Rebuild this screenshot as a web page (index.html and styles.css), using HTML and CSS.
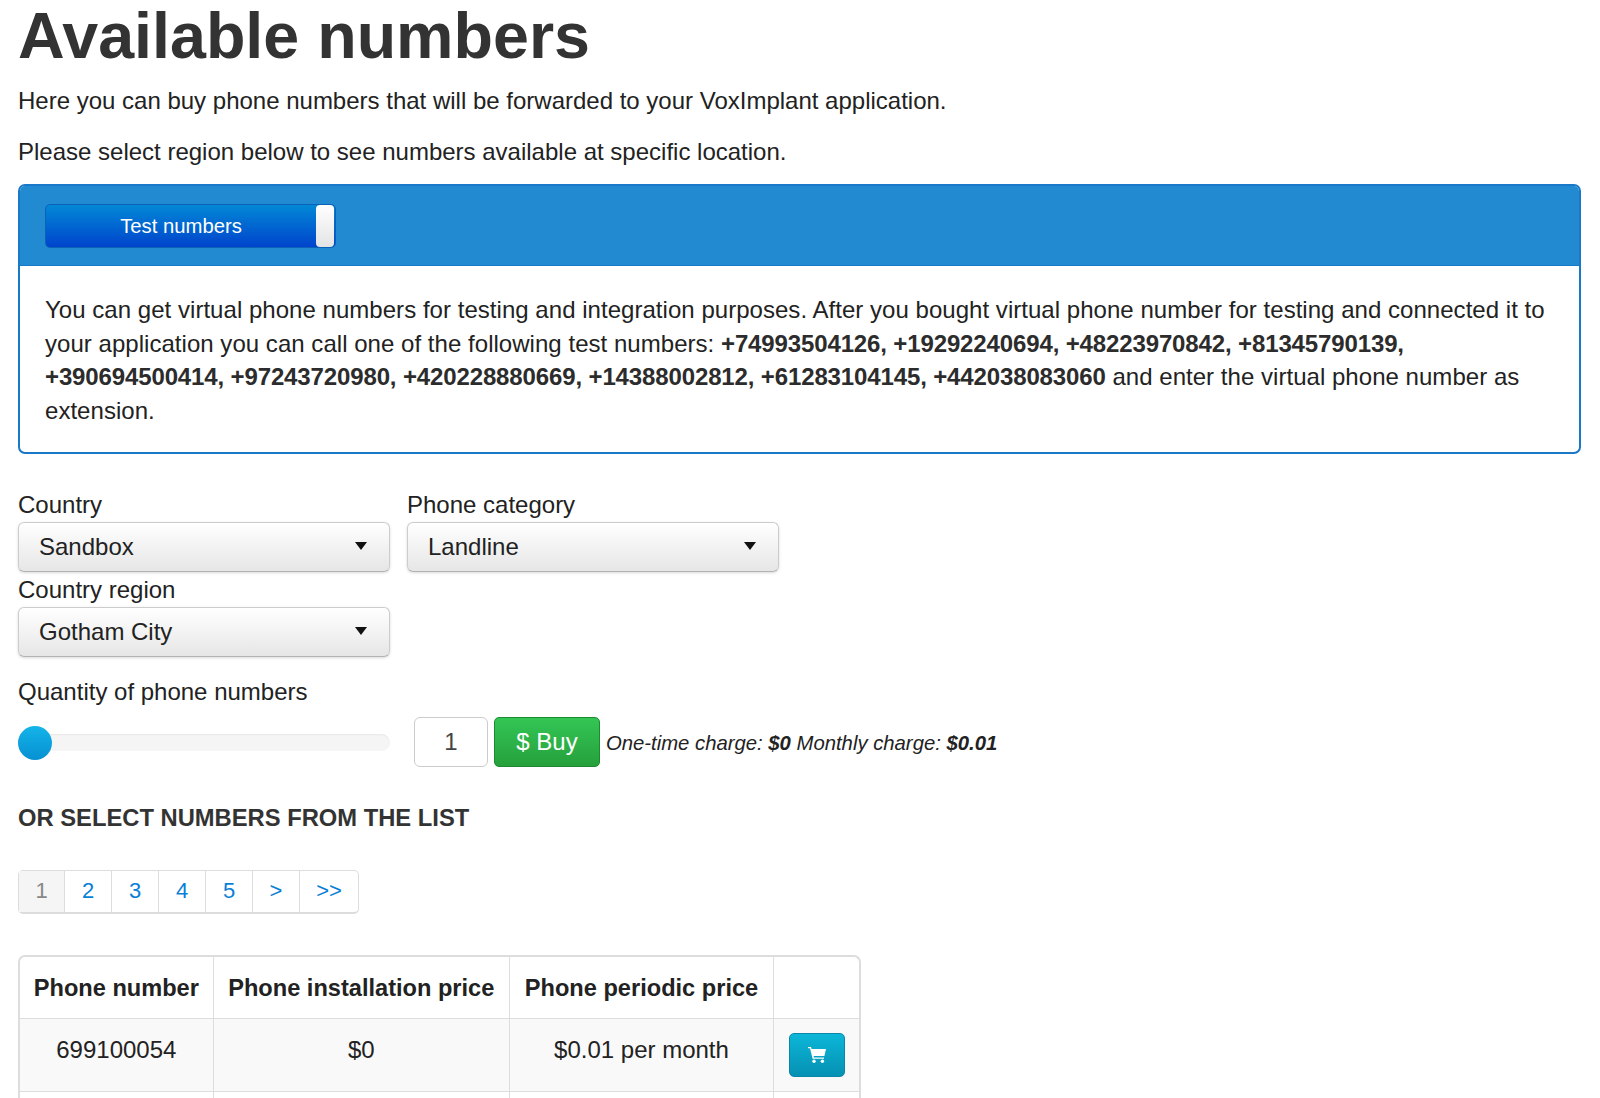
FILE: index.html
```html
<!DOCTYPE html>
<html lang="en">

<head>
    <meta charset="UTF-8">
    <meta name="viewport" content="width=device-width, initial-scale=1.0">
    <title>Available numbers</title>
    <link rel="stylesheet" href="styles.css">
</head>

<body>
    <main class="page">
        <h1>Available numbers</h1>
        <p class="intro">Here you can buy phone numbers that will be forwarded to your VoxImplant application.</p>
        <p class="intro">Please select region below to see numbers available at specific location.</p>

        <section class="panel">
            <div class="panel-head">
                <div class="toggle">
                    <span class="toggle-label">Test numbers</span>
                    <span class="toggle-handle"></span>
                </div>
            </div>
            <div class="panel-body">
                You can get virtual phone numbers for testing and integration purposes. After you bought virtual phone number for testing and connected it to your application you can call one of the following test numbers:
                <b>+74993504126, +19292240694, +48223970842, +81345790139, +390694500414, +97243720980, +420228880669, +14388002812, +61283104145, +442038083060</b>
                and enter the virtual phone number as extension.
            </div>
        </section>

        <div class="form-row first">
            <div class="field">
                <label>Country</label>
                <div class="select"><span>Sandbox</span><i class="caret"></i></div>
            </div>
            <div class="field">
                <label>Phone category</label>
                <div class="select"><span>Landline</span><i class="caret"></i></div>
            </div>
        </div>
        <div class="form-row">
            <div class="field">
                <label>Country region</label>
                <div class="select"><span>Gotham City</span><i class="caret"></i></div>
            </div>
        </div>

        <label class="qty-label">Quantity of phone numbers</label>
        <div class="qty-row">
            <div class="slider"><span class="slider-thumb"></span></div>
            <div class="qty-input">1</div>
            <button class="buy-btn" type="button">$ Buy</button>
            <em class="charge">One-time charge: <b>$0</b> Monthly charge: <b>$0.01</b></em>
        </div>

        <h4 class="list-title">Or select numbers from the list</h4>

        <ul class="pagination">
            <li class="active">1</li>
            <li>2</li>
            <li>3</li>
            <li>4</li>
            <li>5</li>
            <li>&gt;</li>
            <li class="last">&gt;&gt;</li>
        </ul>

        <table class="numbers">
            <thead>
                <tr>
                    <th class="col-number">Phone number</th>
                    <th class="col-install">Phone installation price</th>
                    <th class="col-period">Phone periodic price</th>
                    <th class="col-action"></th>
                </tr>
            </thead>
            <tbody>
                <tr>
                    <td>699100054</td>
                    <td>$0</td>
                    <td>$0.01 per month</td>
                    <td class="action">
                        <button class="cart-btn" type="button">
                            <svg width="18" height="16" viewBox="0 0 18 16">
                                <path fill="#fff" d="M0 0h3l.6 2H18l-1.6 7H5.6l.3 1.4H16v1.4H4.6L2 1.3H0z" />
                                <circle cx="6" cy="14.2" r="1.7" fill="#fff" />
                                <circle cx="14.4" cy="14.2" r="1.7" fill="#fff" />
                            </svg>
                        </button>
                    </td>
                </tr>
                <tr>
                    <td></td>
                    <td></td>
                    <td></td>
                    <td></td>
                </tr>
            </tbody>
        </table>
    </main>
</body>

</html>
```

FILE: styles.css
```css
html, body {
    margin: 0;
    height: 1098px;
    overflow: hidden;
    background: #fff;
}

body {
    font-family: "Liberation Sans", Arial, sans-serif;
    font-size: 24px;
    color: #222;
}

.page {
    padding: 0 19px 0 18px;
}

h1 {
    margin: 0 0 15px;
    padding-top: 3px;
    font-size: 64.6px;
    line-height: 66px;
    font-weight: bold;
    color: #333;
}

.intro {
    margin: 0 0 17px;
    font-size: 24px;
    line-height: 34px;
}

.panel {
    margin-top: -2px;
    border: 2px solid #1a78c9;
    border-radius: 7px;
    overflow: hidden;
}

.panel-head {
    background: #228ad0;
    height: 80px;
    padding: 18px 0 0 25px;
    box-sizing: border-box;
    border-bottom: 1px solid #1a78c9;
}

.toggle {
    width: 291px;
    height: 44px;
    box-sizing: border-box;
    border: 1px solid #0a62b8;
    border-radius: 5px;
    background: linear-gradient(#0288d6, #0044cc);
    display: flex;
    align-items: center;
    color: #fff;
    font-size: 20.3px;
}

.toggle-label {
    flex: 1;
    text-align: center;
}

.toggle-handle {
    width: 18px;
    height: 42px;
    border-radius: 4px;
    background: linear-gradient(#fff, #e4e4e4);
    margin-right: 1px;
}

.panel-body {
    padding: 27px 25px 24px;
    font-size: 24px;
    line-height: 33.7px;
    letter-spacing: 0.035px;
}

.panel-body b {
    color: #2c2c2c;
    letter-spacing: -0.13px;
}

label {
    display: block;
    font-size: 24px;
    line-height: 28px;
}

.form-row {
    display: flex;
    gap: 17px;
    margin-top: 4px;
}

.form-row.first {
    margin-top: 37px;
}

.field {
    width: 372px;
}

.select {
    height: 50px;
    box-sizing: border-box;
    margin-top: 3px;
    padding: 1px 22px 0 20px;
    border: 1px solid #ccc;
    border-bottom-color: #b3b3b3;
    border-radius: 6px;
    background: linear-gradient(#fff, #e6e6e6);
    box-shadow: 0 1px 3px rgba(0, 0, 0, 0.15);
    display: flex;
    align-items: center;
    justify-content: space-between;
    font-size: 24px;
}

.caret {
    width: 0;
    height: 0;
    border-top: 8px solid #111;
    border-left: 6.5px solid transparent;
    border-right: 6.5px solid transparent;
    margin-top: -2px;
}

.qty-label {
    margin-top: 21px;
}

.qty-row {
    display: flex;
    align-items: center;
    margin-top: 11px;
}

.slider {
    position: relative;
    width: 372px;
    height: 17px;
    margin: 2px 24px 0 0;
    border-radius: 9px;
    background: #f5f5f5;
    box-shadow: inset 0 1px 2px rgba(0, 0, 0, 0.06);
}

.slider-thumb {
    position: absolute;
    left: 0;
    top: -8px;
    width: 34px;
    height: 34px;
    border-radius: 50%;
    background: linear-gradient(#14b4e8, #0690d2);
}

.qty-input {
    width: 74px;
    height: 50px;
    box-sizing: border-box;
    border: 1px solid #ccc;
    border-radius: 6px;
    display: flex;
    align-items: center;
    justify-content: center;
    color: #444;
    font-size: 24px;
}

.buy-btn {
    width: 106px;
    height: 50px;
    margin-left: 6px;
    padding: 1px 0 0;
    border: 1px solid #1c8a2e;
    border-radius: 5px;
    background: linear-gradient(#33c655, #26a03c);
    color: #fff;
    font: 24px "Liberation Sans", Arial, sans-serif;
}

.charge {
    margin: 3px 0 0 6px;
    font-size: 20.3px;
    color: #222;
}

.list-title {
    margin: 34px 0 0;
    font-size: 23.75px;
    line-height: 34px;
    font-weight: bold;
    text-transform: uppercase;
    color: #333;
}

.pagination {
    list-style: none;
    display: inline-flex;
    margin: 35px 0 0;
    padding: 0;
    height: 44px;
    box-sizing: border-box;
    border: 1px solid #ddd;
    border-bottom-width: 2px;
    border-radius: 5px;
    font-size: 22px;
    color: #0a7fd6;
    vertical-align: top;
}

.pagination li {
    width: 47px;
    box-sizing: border-box;
    border-right: 1px solid #ddd;
    display: flex;
    align-items: center;
    justify-content: center;
}

.pagination .active {
    width: 46px;
    background: #f5f5f5;
    color: #888;
}

.pagination .last {
    width: 58px;
    border-right: 0;
}

.numbers {
    display: block;
    width: 843px;
    margin-top: 41px;
    border-spacing: 0;
    border-collapse: separate;
    border: 1px solid #ddd;
    border-width: 2px 2px 0;
    border-radius: 7px 7px 0 0;
    font-size: 24px;
    text-align: center;
}

.numbers th,
.numbers td {
    box-sizing: border-box;
    border-right: 1px solid #ddd;
    padding: 0;
}

.numbers th {
    height: 62px;
    border-bottom: 1px solid #ddd;
    font-size: 23.6px;
    padding-top: 2px;
}

.numbers td {
    height: 73px;
    border-bottom: 1px solid #ddd;
    background: #f9f9f9;
    vertical-align: top;
    padding-top: 17px;
}

.numbers th:last-child,
.numbers td:last-child {
    border-right: 0;
}

.col-number { width: 194px; }
.col-install { width: 297px; }
.col-period { width: 265px; }
.col-action { width: 85px; }

.numbers td.action {
    padding-top: 14px;
}

.numbers tr:last-child td {
    height: 6px;
    padding: 0;
    border-bottom: 0;
    background: #fff;
}

.cart-btn {
    width: 56px;
    height: 44px;
    border: 1px solid #0a87a8;
    border-radius: 5px;
    background: linear-gradient(#0cb6d8, #0591b3);
    display: inline-flex;
    align-items: center;
    justify-content: center;
    padding: 0;
}
```
